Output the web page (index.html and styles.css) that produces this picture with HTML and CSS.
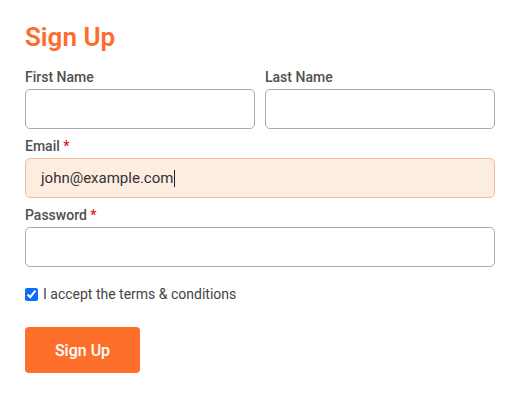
FILE: index.html
```html
<!DOCTYPE html>
<html lang="en">
<head>
<meta charset="utf-8">
<title>Sign Up</title>
<link rel="stylesheet" href="styles.css">
</head>
<body>
<form class="signup">
  <h1 class="title">Sign Up</h1>
  <div class="row">
    <div class="field">
      <label class="label" for="first">First Name</label>
      <input class="input" id="first" type="text">
    </div>
    <div class="field">
      <label class="label" for="last">Last Name</label>
      <input class="input" id="last" type="text">
    </div>
  </div>
  <div class="field">
    <label class="label" for="email">Email <span class="req">*</span></label>
    <div class="input input-active" id="email">john@example.com<span class="caret"></span></div>
  </div>
  <div class="field">
    <label class="label" for="pw">Password <span class="req">*</span></label>
    <input class="input" id="pw" type="password">
  </div>
  <label class="check">
    <input class="check-box" type="checkbox" checked>
    <span>I accept the terms &amp; conditions</span>
  </label>
  <button class="btn" type="button">Sign Up</button>
</form>
</body>
</html>
```

FILE: styles.css
```css
* { box-sizing: border-box; }
html, body { margin: 0; background: #fff; }
body {
  font-family: Roboto, "Liberation Sans", Arial, sans-serif;
  padding: 23px 27px 0 25px;
}
.signup { width: 470px; display: flex; flex-direction: column; }
.title {
  margin: 0 0 18px;
  font-size: 26px;
  line-height: 28px;
  font-weight: 600;
  color: #ff6b2c;
}
.row { display: flex; gap: 10px; }
.row .field { flex: 1; }
.field { display: flex; flex-direction: column; margin-bottom: 9px; }
.label {
  font-size: 14px;
  line-height: 16px;
  font-weight: 500;
  color: #505050;
  margin-bottom: 4px;
}
.req { color: #e3151a; }
.input {
  height: 40px;
  width: 100%;
  border: 1px solid #a9a9a9;
  border-radius: 5px;
  background: #fff;
  font-family: inherit;
  font-size: 15px;
  color: #333;
  padding: 0 15px;
  outline: none;
}
.input-active {
  display: flex;
  align-items: center;
  background: #fdece0;
  border-color: #f8bb93;
}
.caret {
  display: inline-block;
  width: 1px;
  height: 17px;
  background: #222;
  margin-left: 1px;
}
.check {
  display: flex;
  align-items: center;
  gap: 5px;
  margin-top: 10px;
  font-size: 14px;
  line-height: 17px;
  color: #444;
}
.check-box { margin: 0; width: 13px; height: 13px; accent-color: #0b6cf5; }
.btn {
  align-self: flex-start;
  margin-top: 24px;
  width: 115px;
  height: 46px;
  border: none;
  border-radius: 4px;
  background: #ff6f2c;
  color: #fff;
  font-family: inherit;
  font-size: 16px;
  font-weight: 500;
}
```
